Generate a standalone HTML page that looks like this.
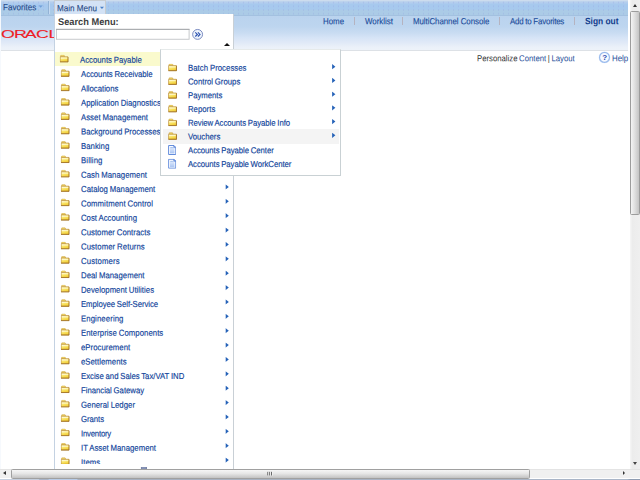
<!DOCTYPE html>
<html><head><meta charset="utf-8"><title>Main Menu</title>
<style>
html,body{margin:0;padding:0;overflow:hidden}
body{width:640px;height:480px;overflow:hidden;background:#fff;position:relative;font-family:"Liberation Sans",sans-serif;font-size:8px;color:#000}
*{box-sizing:border-box}
.abs,.ic,.mi,.ar,.hl,.hl2,.t{position:absolute}
.t{white-space:nowrap;line-height:1;transform:scaleY(1.12) rotate(0.03deg);transform-origin:0 60%}
#top{left:0;top:0;width:628px;height:15.4px;background:radial-gradient(circle,rgba(150,160,225,0.28) 0.5px,rgba(150,160,225,0) 1.1px) 1px 4.4px/5px 3.7px,linear-gradient(#cddcee 0,#cddcee 1px,#b6cfec 1.7px,#b2cdee 3px,#a7c9ee 4.2px,#a7c9ee 9px,#abcbe7 10.5px,#abcbe6 100%)}
#nav{left:0;top:14.6px;width:628px;height:35.4px;background:linear-gradient(#bad3ee 0,#bdd5ef 30%,#c9dcf2 50%,#d6e4f6 64%,#e0e9f7 78%,#ebf1f9 92%,#edf2f9 100%);border-top:1px solid #a3c1e0}
#navline{left:0;top:49.8px;width:628px;height:1.4px;background:#dde1e6}
.mi{word-spacing:-0.35px;transform:scaleY(1.12);transform-origin:0 50%;white-space:nowrap;color:#10439a;font-size:7.76px;-webkit-text-stroke:0.14px #10439a;line-height:14px;height:14px;text-decoration:none}
.nl{color:#1a4b9a;font-size:7.9px;-webkit-text-stroke:0.1px #1a4b9a}
.ic,.ar,.mi{left:0;top:0}

.hl{background:#fafacd}
.hl2{background:#f4f4f4}
.ar{width:0;height:0;border-left:3.1px solid #2260b6;border-top:2.8px solid transparent;border-bottom:2.8px solid transparent}
#panel{left:54px;top:13.5px;width:180px;height:455.5px;background:#fff;border-left:1px solid #c4d2e2;border-right:1px solid #c9d0d6}
#sub{left:160.2px;top:49px;width:180.7px;height:127px;background:#fff;border:1px solid #c9d1d4;border-top-color:#e6eaea}
</style></head><body>
<svg width="0" height="0" style="position:absolute"><defs>
<linearGradient id="fg" x1="0" y1="0" x2="0.4" y2="1"><stop offset="0" stop-color="#fffbd6"/><stop offset="0.45" stop-color="#fbe873"/><stop offset="1" stop-color="#f2cf36"/></linearGradient>
<g id="fold"><path d="M1 1.9 L1 0.7 Q1 0.3 1.5 0.3 L4.1 0.3 Q4.5 0.3 4.7 0.9 L4.9 1.9 Z" fill="#f7e06a" stroke="#c9a040" stroke-width="0.55"/><path d="M0.45 1.95 L8.3 1.95 L8.3 7 L0.45 7 Z" fill="url(#fg)" stroke="#b88a34" stroke-width="0.7"/><path d="M0.3 7.1 L8.45 7.1 L8.45 2.2" fill="none" stroke="#9c6c20" stroke-width="0.75"/><path d="M1.2 3.3 L7.6 3.3" stroke="#fffde8" stroke-width="0.7"/></g>
<linearGradient id="dg" x1="0" y1="0" x2="0" y2="1"><stop offset="0" stop-color="#dfeafc"/><stop offset="1" stop-color="#a9c4f2"/></linearGradient>
<path id="arr" d="M0.1 0.1 L3.4 2.7 L0.1 5.3 Z" fill="#2562b8"/>
<g id="doc"><path d="M0.5 0.5 L5.9 0.5 L7.7 2.3 L7.7 9.5 L0.5 9.5Z" fill="#fbfdff" stroke="#5a85da" stroke-width="0.95"/><path d="M1.9 2.6 L6.4 2.6 L6.4 8.4 L1.9 8.4Z" fill="url(#dg)"/><path d="M2.2 2.6h2.6" stroke="#7ea3e4" stroke-width="0.7"/><path d="M5.6 0.6 L5.6 2.6 L7.6 2.6 Z" fill="#7fa4e6" stroke="#4f7cd4" stroke-width="0.5"/></g>
</defs></svg>

<div id="top" class="abs"></div>
<div id="nav" class="abs"></div>
<div id="navline" class="abs"></div>

<!-- tabs -->
<div class="t" style="left:2.5px;top:3.8px;font-size:8.1px;color:#274a86;-webkit-text-stroke:0.1px #274a86">Favorites</div>
<svg class="abs" style="left:0;top:0;transform:translate(38.4px,5.3px)" width="5" height="3" viewBox="0 0 5 3"><path d="M0 0H4.5L2.25 2.5Z" fill="#6f9fd8"/></svg>
<div class="abs" style="left:48px;top:1px;width:1px;height:13px;background:#93b3d6"></div>
<div class="abs" style="left:49px;top:1px;width:1px;height:13px;background:#c5daf2"></div>
<div class="abs" style="left:54px;top:0;width:52.2px;height:14px;background:#d3e2f5;border:1px solid #c6cbd0;border-bottom:0"></div>
<div class="t" style="left:57.4px;top:4.6px;font-size:8.1px;color:#274a86;-webkit-text-stroke:0.1px #274a86">Main Menu</div>
<svg class="abs" style="left:0;top:0;transform:translate(99.7px,6.5px)" width="5" height="3" viewBox="0 0 5 3"><path d="M0 0H4.5L2.25 2.5Z" fill="#4a80c8"/></svg>

<!-- logo -->
<svg class="abs" style="left:0;top:24px" width="80" height="20" viewBox="0 24 80 20"><text transform="scale(1.6,1)" x="0.62 8.81 15.50 22.56 30.25 37.50" y="37.85" font-family="Liberation Sans, sans-serif" font-size="11.1" fill="#ee1c25" stroke="#ee1c25" stroke-width="0.1">ORACLE</text></svg>

<!-- nav links -->
<div class="t nl" style="left:323px;top:18.1px">Home</div>
<div class="t nl" style="left:365px;top:18.1px">Worklist</div>
<div class="t nl" style="left:413px;top:18.1px;letter-spacing:-0.045px">MultiChannel Console</div>
<div class="t nl" style="left:510px;top:18.1px;word-spacing:-0.15px;letter-spacing:-0.19px">Add to Favorites</div>
<div class="t" style="left:585px;top:16.5px;color:#123c8c;font-size:8.4px;font-weight:bold">Sign out</div>
<div class="abs" style="left:354px;top:17px;width:1px;height:8px;background:#b5b3c0"></div>
<div class="abs" style="left:402px;top:17px;width:1px;height:8px;background:#b5b3c0"></div>
<div class="abs" style="left:499px;top:17px;width:1px;height:8px;background:#b5b3c0"></div>
<div class="abs" style="left:574px;top:17px;width:1px;height:8px;background:#b5b3c0"></div>

<!-- content links -->
<div class="t" style="left:477px;top:54.6px;font-size:7.75px;color:#333;word-spacing:-0.55px">Personalize <span style="color:#1f4f9a">Content</span> | <span style="color:#1f4f9a">Layout</span></div>
<svg class="abs" style="left:0;top:0;transform:translate(598.5px,51.4px)" width="12" height="12" viewBox="0 0 12 12"><circle cx="6" cy="6" r="5" fill="#f7faff" stroke="#8db2ea" stroke-width="1.25"/><circle cx="6" cy="6" r="5.5" fill="none" stroke="#c4d8f6" stroke-width="0.5"/><text x="6.1" y="8.9" font-size="8" font-weight="bold" text-anchor="middle" fill="#2a4fae" font-family="Liberation Sans, sans-serif">?</text></svg>
<div class="t" style="left:611.8px;top:54.6px;font-size:7.9px;color:#1f4f9a">Help</div>

<!-- main menu panel -->
<div id="panel" class="abs"></div>
<div class="t" style="left:58.3px;top:18.4px;font-size:9.25px;font-weight:bold;color:#404040;transform:scaleY(1.05) rotate(0.03deg)">Search Menu:</div>
<svg class="abs" style="left:50px;top:25px" width="150" height="20" viewBox="50 25 150 20"><rect x="56.4" y="29.35" width="132.7" height="9.9" fill="#fff" stroke="#c0c3c6" stroke-width="0.9"/><path d="M56 29.35H189.5" stroke="#a0a4a8" stroke-width="0.9"/></svg>
<svg class="abs" style="left:191px;top:28px" width="13" height="13" viewBox="0 0 13 13"><circle cx="6.6" cy="6.4" r="4.95" fill="#eef4fc" stroke="#6679b6" stroke-width="0.85"/><path d="M4.3 4.3 L6.4 6.4 L4.3 8.5 M6.9 4.3 L9 6.4 L6.9 8.5" fill="none" stroke="#2c52b0" stroke-width="1.15"/></svg>
<i class="abs" style="left:223.6px;top:42.6px;border-bottom:3px solid #111;border-left:3.1px solid transparent;border-right:3.1px solid transparent"></i>
<div class="hl" style="left:55.3px;top:51.8px;width:105.5px;height:14.2px"></div>
<svg class="ic" style="transform:translate(59.7px,54.85px)" width="9" height="7.6" viewBox="0 0 9 7.6"><use href="#fold"/></svg>
<a class="mi" style="transform:translate(80.0px,53.45px) scaleY(1.12) rotate(0.03deg);letter-spacing:0.006px">Accounts Payable</a>
<svg class="ic" style="transform:translate(60.7px,69.22px)" width="9" height="7.6" viewBox="0 0 9 7.6"><use href="#fold"/></svg>
<a class="mi" style="transform:translate(81.0px,67.83px) scaleY(1.12) rotate(0.03deg);letter-spacing:-0.026px">Accounts Receivable</a>
<svg class="ic" style="transform:translate(60.7px,83.6px)" width="9" height="7.6" viewBox="0 0 9 7.6"><use href="#fold"/></svg>
<a class="mi" style="transform:translate(81.0px,82.20px) scaleY(1.12) rotate(0.03deg);letter-spacing:-0.017px">Allocations</a>
<svg class="ic" style="transform:translate(60.7px,97.97px)" width="9" height="7.6" viewBox="0 0 9 7.6"><use href="#fold"/></svg>
<a class="mi" style="transform:translate(81.0px,96.58px) scaleY(1.12) rotate(0.03deg)">Application Diagnostics</a>
<svg class="ic" style="transform:translate(60.7px,112.35px)" width="9" height="7.6" viewBox="0 0 9 7.6"><use href="#fold"/></svg>
<a class="mi" style="transform:translate(81.0px,110.95px) scaleY(1.12) rotate(0.03deg);letter-spacing:0.039px">Asset Management</a>
<svg class="ic" style="transform:translate(60.7px,126.72px)" width="9" height="7.6" viewBox="0 0 9 7.6"><use href="#fold"/></svg>
<a class="mi" style="transform:translate(81.0px,125.33px) scaleY(1.12) rotate(0.03deg)">Background Processes</a>
<svg class="ic" style="transform:translate(60.7px,141.1px)" width="9" height="7.6" viewBox="0 0 9 7.6"><use href="#fold"/></svg>
<a class="mi" style="transform:translate(81.0px,139.70px) scaleY(1.12) rotate(0.03deg);letter-spacing:0.04px">Banking</a>
<svg class="ic" style="transform:translate(60.7px,155.48px)" width="9" height="7.6" viewBox="0 0 9 7.6"><use href="#fold"/></svg>
<a class="mi" style="transform:translate(81.0px,154.08px) scaleY(1.12) rotate(0.03deg);letter-spacing:0.123px">Billing</a>
<svg class="ic" style="transform:translate(60.7px,169.85px)" width="9" height="7.6" viewBox="0 0 9 7.6"><use href="#fold"/></svg>
<a class="mi" style="transform:translate(81.0px,168.45px) scaleY(1.12) rotate(0.03deg);letter-spacing:0.06px">Cash Management</a>
<svg class="ic" style="transform:translate(60.7px,184.23px)" width="9" height="7.6" viewBox="0 0 9 7.6"><use href="#fold"/></svg>
<a class="mi" style="transform:translate(81.0px,182.83px) scaleY(1.12) rotate(0.03deg);letter-spacing:0.03px">Catalog Management</a>
<svg class="ic" style="transform:translate(225.4px,184.23px)" width="4" height="6" viewBox="0 0 4 6"><use href="#arr"/></svg>
<svg class="ic" style="transform:translate(60.7px,198.6px)" width="9" height="7.6" viewBox="0 0 9 7.6"><use href="#fold"/></svg>
<a class="mi" style="transform:translate(81.0px,197.20px) scaleY(1.12) rotate(0.03deg);letter-spacing:0.074px">Commitment Control</a>
<svg class="ic" style="transform:translate(225.4px,198.6px)" width="4" height="6" viewBox="0 0 4 6"><use href="#arr"/></svg>
<svg class="ic" style="transform:translate(60.7px,212.98px)" width="9" height="7.6" viewBox="0 0 9 7.6"><use href="#fold"/></svg>
<a class="mi" style="transform:translate(81.0px,211.58px) scaleY(1.12) rotate(0.03deg);letter-spacing:0.026px">Cost Accounting</a>
<svg class="ic" style="transform:translate(225.4px,212.98px)" width="4" height="6" viewBox="0 0 4 6"><use href="#arr"/></svg>
<svg class="ic" style="transform:translate(60.7px,227.35px)" width="9" height="7.6" viewBox="0 0 9 7.6"><use href="#fold"/></svg>
<a class="mi" style="transform:translate(81.0px,225.95px) scaleY(1.12) rotate(0.03deg);letter-spacing:0.041px">Customer Contracts</a>
<svg class="ic" style="transform:translate(225.4px,227.35px)" width="4" height="6" viewBox="0 0 4 6"><use href="#arr"/></svg>
<svg class="ic" style="transform:translate(60.7px,241.73px)" width="9" height="7.6" viewBox="0 0 9 7.6"><use href="#fold"/></svg>
<a class="mi" style="transform:translate(81.0px,240.33px) scaleY(1.12) rotate(0.03deg);letter-spacing:0.079px">Customer Returns</a>
<svg class="ic" style="transform:translate(225.4px,241.73px)" width="4" height="6" viewBox="0 0 4 6"><use href="#arr"/></svg>
<svg class="ic" style="transform:translate(60.7px,256.1px)" width="9" height="7.6" viewBox="0 0 9 7.6"><use href="#fold"/></svg>
<a class="mi" style="transform:translate(81.0px,254.70px) scaleY(1.12) rotate(0.03deg);letter-spacing:0.148px">Customers</a>
<svg class="ic" style="transform:translate(225.4px,256.1px)" width="4" height="6" viewBox="0 0 4 6"><use href="#arr"/></svg>
<svg class="ic" style="transform:translate(60.7px,270.48px)" width="9" height="7.6" viewBox="0 0 9 7.6"><use href="#fold"/></svg>
<a class="mi" style="transform:translate(81.0px,269.07px) scaleY(1.12) rotate(0.03deg);letter-spacing:0.037px">Deal Management</a>
<svg class="ic" style="transform:translate(225.4px,270.48px)" width="4" height="6" viewBox="0 0 4 6"><use href="#arr"/></svg>
<svg class="ic" style="transform:translate(60.7px,284.85px)" width="9" height="7.6" viewBox="0 0 9 7.6"><use href="#fold"/></svg>
<a class="mi" style="transform:translate(81.0px,283.45px) scaleY(1.12) rotate(0.03deg);letter-spacing:0.028px">Development Utilities</a>
<svg class="ic" style="transform:translate(225.4px,284.85px)" width="4" height="6" viewBox="0 0 4 6"><use href="#arr"/></svg>
<svg class="ic" style="transform:translate(60.7px,299.23px)" width="9" height="7.6" viewBox="0 0 9 7.6"><use href="#fold"/></svg>
<a class="mi" style="transform:translate(81.0px,297.82px) scaleY(1.12) rotate(0.03deg);letter-spacing:-0.048px">Employee Self-Service</a>
<svg class="ic" style="transform:translate(225.4px,299.23px)" width="4" height="6" viewBox="0 0 4 6"><use href="#arr"/></svg>
<svg class="ic" style="transform:translate(60.7px,313.6px)" width="9" height="7.6" viewBox="0 0 9 7.6"><use href="#fold"/></svg>
<a class="mi" style="transform:translate(81.0px,312.20px) scaleY(1.12) rotate(0.03deg);letter-spacing:0.107px">Engineering</a>
<svg class="ic" style="transform:translate(225.4px,313.6px)" width="4" height="6" viewBox="0 0 4 6"><use href="#arr"/></svg>
<svg class="ic" style="transform:translate(60.7px,327.98px)" width="9" height="7.6" viewBox="0 0 9 7.6"><use href="#fold"/></svg>
<a class="mi" style="transform:translate(81.0px,326.57px) scaleY(1.12) rotate(0.03deg);letter-spacing:0.058px">Enterprise Components</a>
<svg class="ic" style="transform:translate(225.4px,327.98px)" width="4" height="6" viewBox="0 0 4 6"><use href="#arr"/></svg>
<svg class="ic" style="transform:translate(60.7px,342.35px)" width="9" height="7.6" viewBox="0 0 9 7.6"><use href="#fold"/></svg>
<a class="mi" style="transform:translate(81.0px,340.95px) scaleY(1.12) rotate(0.03deg);letter-spacing:0.051px">eProcurement</a>
<svg class="ic" style="transform:translate(225.4px,342.35px)" width="4" height="6" viewBox="0 0 4 6"><use href="#arr"/></svg>
<svg class="ic" style="transform:translate(60.7px,356.73px)" width="9" height="7.6" viewBox="0 0 9 7.6"><use href="#fold"/></svg>
<a class="mi" style="transform:translate(81.0px,355.32px) scaleY(1.12) rotate(0.03deg);letter-spacing:0.026px">eSettlements</a>
<svg class="ic" style="transform:translate(225.4px,356.73px)" width="4" height="6" viewBox="0 0 4 6"><use href="#arr"/></svg>
<svg class="ic" style="transform:translate(60.7px,371.1px)" width="9" height="7.6" viewBox="0 0 9 7.6"><use href="#fold"/></svg>
<a class="mi" style="transform:translate(81.0px,369.70px) scaleY(1.12) rotate(0.03deg);letter-spacing:-0.01px">Excise and Sales Tax/VAT IND</a>
<svg class="ic" style="transform:translate(225.4px,371.1px)" width="4" height="6" viewBox="0 0 4 6"><use href="#arr"/></svg>
<svg class="ic" style="transform:translate(60.7px,385.48px)" width="9" height="7.6" viewBox="0 0 9 7.6"><use href="#fold"/></svg>
<a class="mi" style="transform:translate(81.0px,384.07px) scaleY(1.12) rotate(0.03deg);letter-spacing:-0.021px">Financial Gateway</a>
<svg class="ic" style="transform:translate(225.4px,385.48px)" width="4" height="6" viewBox="0 0 4 6"><use href="#arr"/></svg>
<svg class="ic" style="transform:translate(60.7px,399.85px)" width="9" height="7.6" viewBox="0 0 9 7.6"><use href="#fold"/></svg>
<a class="mi" style="transform:translate(81.0px,398.45px) scaleY(1.12) rotate(0.03deg);letter-spacing:0.038px">General Ledger</a>
<svg class="ic" style="transform:translate(225.4px,399.85px)" width="4" height="6" viewBox="0 0 4 6"><use href="#arr"/></svg>
<svg class="ic" style="transform:translate(60.7px,414.23px)" width="9" height="7.6" viewBox="0 0 9 7.6"><use href="#fold"/></svg>
<a class="mi" style="transform:translate(81.0px,412.82px) scaleY(1.12) rotate(0.03deg);letter-spacing:-0.037px">Grants</a>
<svg class="ic" style="transform:translate(225.4px,414.23px)" width="4" height="6" viewBox="0 0 4 6"><use href="#arr"/></svg>
<svg class="ic" style="transform:translate(60.7px,428.6px)" width="9" height="7.6" viewBox="0 0 9 7.6"><use href="#fold"/></svg>
<a class="mi" style="transform:translate(81.0px,427.20px) scaleY(1.12) rotate(0.03deg);letter-spacing:-0.205px">Inventory</a>
<svg class="ic" style="transform:translate(225.4px,428.6px)" width="4" height="6" viewBox="0 0 4 6"><use href="#arr"/></svg>
<svg class="ic" style="transform:translate(60.7px,442.98px)" width="9" height="7.6" viewBox="0 0 9 7.6"><use href="#fold"/></svg>
<a class="mi" style="transform:translate(81.0px,441.57px) scaleY(1.12) rotate(0.03deg);letter-spacing:0.026px">IT Asset Management</a>
<svg class="ic" style="transform:translate(225.4px,442.98px)" width="4" height="6" viewBox="0 0 4 6"><use href="#arr"/></svg>
<svg class="ic" style="transform:translate(60.7px,457.35px)" width="9" height="7.6" viewBox="0 0 9 7.6"><use href="#fold"/></svg>
<a class="mi" style="transform:translate(81.0px,455.95px) scaleY(1.12) rotate(0.03deg);letter-spacing:0.069px">Items</a>
<svg class="ic" style="transform:translate(225.4px,457.35px)" width="4" height="6" viewBox="0 0 4 6"><use href="#arr"/></svg>
<div class="abs" style="left:55px;top:464.3px;width:178px;height:5px;background:#fff"></div>
<svg class="abs" style="left:0;top:0;transform:translate(140.7px,466.9px)" width="7" height="3" viewBox="0 0 7 3"><rect x="0" y="0" width="6.3" height="2.3" fill="#7a86a8"/><rect x="1.2" y="0.6" width="4" height="1" fill="#8f9dc4"/></svg>

<!-- sub menu -->
<div id="sub" class="abs"></div>
<svg class="ic" style="transform:translate(168.1px,63.65px)" width="9" height="7.6" viewBox="0 0 9 7.6"><use href="#fold"/></svg>
<svg class="ic" style="transform:translate(332px,64.0px)" width="4" height="6" viewBox="0 0 4 6"><use href="#arr"/></svg>
<a class="mi" style="transform:translate(188.0px,61.60px) scaleY(1.12) rotate(0.03deg);letter-spacing:0.049px">Batch Processes</a>
<svg class="ic" style="transform:translate(168.1px,77.37px)" width="9" height="7.6" viewBox="0 0 9 7.6"><use href="#fold"/></svg>
<svg class="ic" style="transform:translate(332px,77.72px)" width="4" height="6" viewBox="0 0 4 6"><use href="#arr"/></svg>
<a class="mi" style="transform:translate(188.0px,75.32px) scaleY(1.12) rotate(0.03deg);letter-spacing:0.006px">Control Groups</a>
<svg class="ic" style="transform:translate(168.1px,91.09px)" width="9" height="7.6" viewBox="0 0 9 7.6"><use href="#fold"/></svg>
<svg class="ic" style="transform:translate(332px,91.44px)" width="4" height="6" viewBox="0 0 4 6"><use href="#arr"/></svg>
<a class="mi" style="transform:translate(188.0px,89.04px) scaleY(1.12) rotate(0.03deg);letter-spacing:-0.022px">Payments</a>
<svg class="ic" style="transform:translate(168.1px,104.81px)" width="9" height="7.6" viewBox="0 0 9 7.6"><use href="#fold"/></svg>
<svg class="ic" style="transform:translate(332px,105.16px)" width="4" height="6" viewBox="0 0 4 6"><use href="#arr"/></svg>
<a class="mi" style="transform:translate(188.0px,102.76px) scaleY(1.12) rotate(0.03deg);letter-spacing:0.022px">Reports</a>
<svg class="ic" style="transform:translate(168.1px,118.53px)" width="9" height="7.6" viewBox="0 0 9 7.6"><use href="#fold"/></svg>
<svg class="ic" style="transform:translate(332px,118.88px)" width="4" height="6" viewBox="0 0 4 6"><use href="#arr"/></svg>
<a class="mi" style="transform:translate(188.0px,116.48px) scaleY(1.12) rotate(0.03deg);letter-spacing:-0.042px">Review Accounts Payable Info</a>
<div class="hl2" style="left:163px;top:129.30px;width:175.6px;height:14.3px"></div>
<svg class="ic" style="transform:translate(168.1px,132.25px)" width="9" height="7.6" viewBox="0 0 9 7.6"><use href="#fold"/></svg>
<svg class="ic" style="transform:translate(332px,132.6px)" width="4" height="6" viewBox="0 0 4 6"><use href="#arr"/></svg>
<a class="mi" style="transform:translate(188.0px,130.20px) scaleY(1.12) rotate(0.03deg)">Vouchers</a>
<svg class="ic" style="transform:translate(168.1px,145.02px)" width="8.2" height="10" viewBox="0 0 8.2 10"><use href="#doc"/></svg>
<a class="mi" style="transform:translate(188.0px,143.92px) scaleY(1.12) rotate(0.03deg);letter-spacing:-0.042px">Accounts Payable Center</a>
<svg class="ic" style="transform:translate(168.1px,158.74px)" width="8.2" height="10" viewBox="0 0 8.2 10"><use href="#doc"/></svg>
<a class="mi" style="transform:translate(188.0px,157.64px) scaleY(1.12) rotate(0.03deg);letter-spacing:-0.052px">Accounts Payable WorkCenter</a>

<!-- scrollbars -->
<div class="abs" style="left:629.5px;top:0;width:10.5px;height:469px;background:linear-gradient(90deg,#f6f6f6,#ececec 25%,#efefef)"></div>
<div class="abs" style="left:630px;top:11px;width:10px;height:204px;background:linear-gradient(90deg,#f4f4f4,#e0e0e0 45%,#c4c4c4);border:1px solid #9c9c9c;border-radius:1.5px"></div>
<i class="abs" style="left:632.5px;top:4px;border-bottom:3px solid #333;border-left:2.8px solid transparent;border-right:2.8px solid transparent"></i>
<i class="abs" style="left:632.6px;top:461.9px;border-top:3px solid #444;border-left:2.7px solid transparent;border-right:2.7px solid transparent"></i>
<div class="abs" style="left:0;top:469px;width:640px;height:9px;background:#f0f0f0;border-top:1px solid #e4e4e4"></div>
<div class="abs" style="left:11px;top:469px;width:518.5px;height:9.5px;background:linear-gradient(#f6f6f6,#e6e6e6 45%,#c2c2c2);border:1px solid #a0a0a0;border-radius:1.5px"></div>
<i class="abs" style="left:3px;top:471px;border-right:3px solid #333;border-top:2.8px solid transparent;border-bottom:2.8px solid transparent"></i>
<i class="abs" style="left:622.6px;top:471.3px;border-left:2.6px solid #333;border-top:2.5px solid transparent;border-bottom:2.5px solid transparent"></i>
<svg class="abs" style="left:0;top:0;transform:translate(267px,471.5px)" width="7" height="5" viewBox="0 0 7 5"><path d="M0.9 0.2V3.9M2.7 0.2V3.9M4.5 0.2V3.9" stroke="#4a4a4a" stroke-width="0.95"/><path d="M1.7 0.4V4.1M3.5 0.4V4.1M5.3 0.4V4.1" stroke="#f8f8f8" stroke-width="0.7"/></svg>
<div class="abs" style="left:0;top:478.6px;width:640px;height:1.4px;background:linear-gradient(90deg,#c4cede 0,#c4cede 6%,#a8b4c8 6.2%,#a8b4c8 7.5%,#b8cce8 7.7%,#b8cce8 12%,#a6b0c0 12.2%,#aab6c8 98%,#8f9db2 98.5%)"></div>
<div class="abs" style="left:0;top:0;width:1.2px;height:469px;background:#f6f9fd"></div>
</body></html>
